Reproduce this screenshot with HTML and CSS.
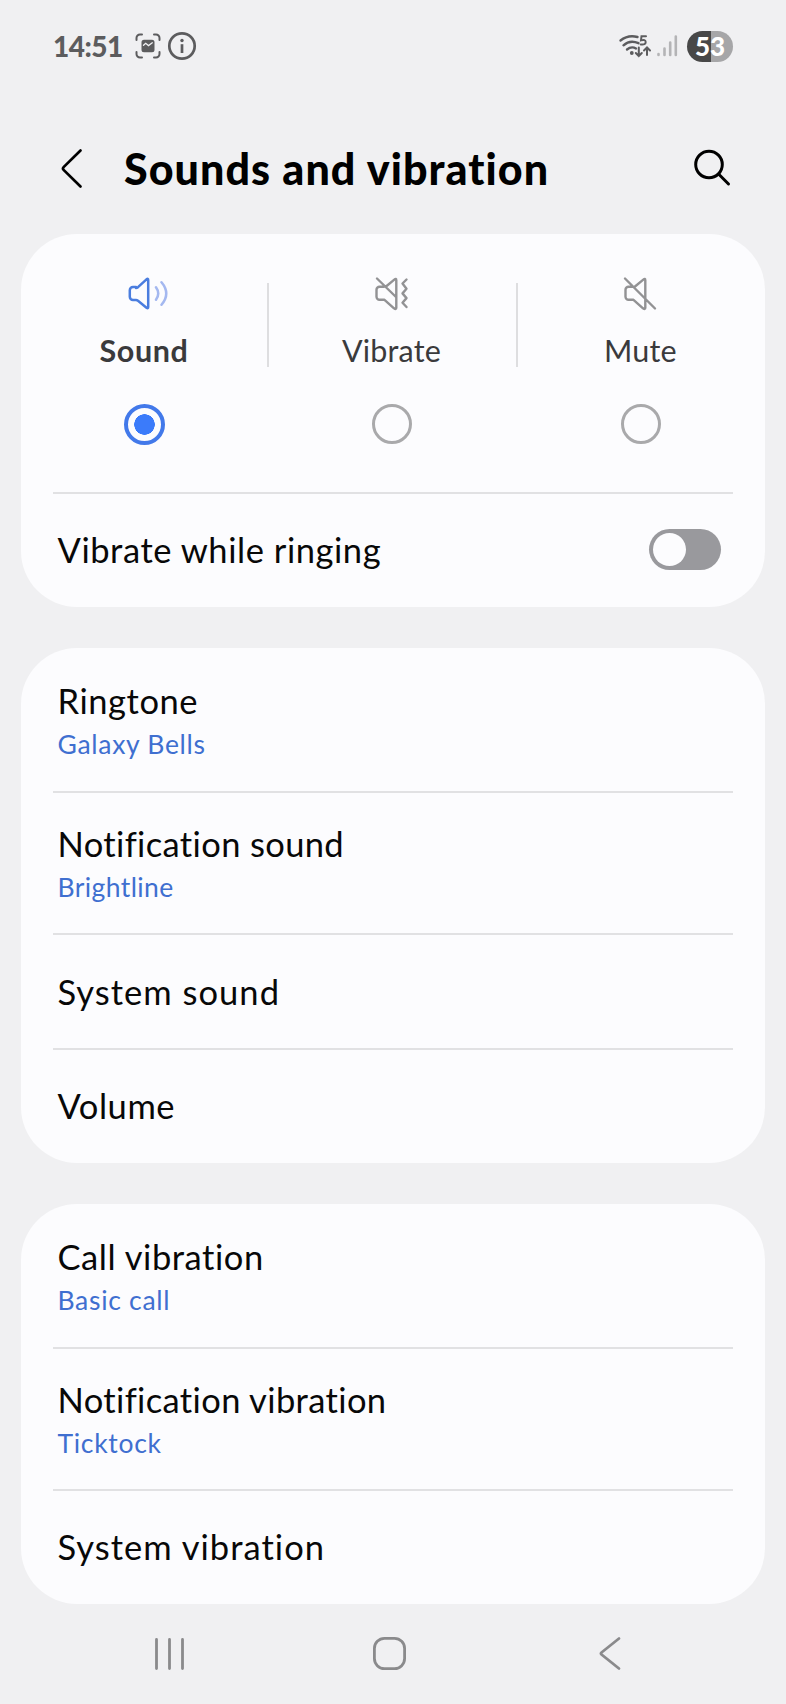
FILE: index.html
```html
<!DOCTYPE html>
<html lang="en">
<head>
<meta charset="utf-8">
<title>Sounds and vibration</title>
<link rel="stylesheet" href="styles.css">
</head>
<body>
<div class="screen">
  <div class="status">
    <span class="clock">14:51</span>
    <svg class="capture" width="26" height="26" viewBox="0 0 26 26" fill="none" stroke="#5c5c5e" stroke-width="2" stroke-linecap="round">
      <path d="M1.5 7V5a3.5 3.5 0 0 1 3.5-3.5h2M19 1.5h2A3.5 3.5 0 0 1 24.500 5v2M24.500 19v2a3.500 3.500 0 0 1-3.500 3.500h-2M7 24.500H5A3.500 3.500 0 0 1 1.500 21v-2"/>
      <rect x="7.500" y="7.800" width="11" height="10.400" rx="1.500" fill="#5c5c5e"/>
      <path d="M8.500 12.300l2.200-2 2.800 2.300 3.800-2.800" stroke="#f0f0f2" stroke-width="1.300"/>
    </svg>
    <svg class="info" width="30" height="30" viewBox="0 0 30 30" fill="none" stroke="#5c5c5e" stroke-width="2.700">
      <circle cx="15" cy="15" r="12.700"/><path d="M15 13.200v8.800"/><circle cx="15" cy="9.500" r="1.700" fill="#5c5c5e" stroke="none"/>
    </svg>
    <svg class="wifi" width="34" height="26" viewBox="0 0 34 26" fill="none" stroke="#5c5c5e" stroke-width="2.400" stroke-linecap="round">
      <path d="M2.500 7.500Q10 1.500 19.500 4M5.500 12.300Q12 6.300 20.500 10.200M9 16.500Q13.500 12.800 18 15.500"/>
      <circle cx="13.800" cy="20" r="1.900" fill="#5c5c5e" stroke="none"/>
      <path d="M28 3.200h-4.500l-.500 4.200q4.500-1.300 4.700 1.600 0 3.200-5 2.400" stroke-width="2"/>
      <path d="M20.800 14.500v8.500m-3-3l3 3 3-3M29 22v-7.500m-3 3l3-3 3 3" stroke-width="2"/>
    </svg>
    <svg class="signal" width="22" height="24" viewBox="0 0 22 24" stroke="#b4b4b6" stroke-width="2.600" stroke-linecap="round">
      <path d="M2.500 20v1M8.500 14.500V21M14.200 8.500V21M19.800 2.500V21"/>
    </svg>
    <div class="battery">53</div>
  </div>

  <header class="header">
    <svg class="back" width="24" height="42" viewBox="0 0 24 42" fill="none" stroke="#000" stroke-width="2.700" stroke-linecap="round" stroke-linejoin="round"><path d="M20.500 2.500L3.600 19.100q-1.400 1.400 0 2.800L20.500 38.500"/></svg>
    <h1 class="title">Sounds and vibration</h1>
    <svg class="search" width="40" height="40" viewBox="0 0 40 40" fill="none" stroke="#000" stroke-width="3" stroke-linecap="round"><circle cx="16" cy="16.500" r="13.300"/><path d="M25.800 26.300L35.500 36"/></svg>
  </header>

  <main class="cards">
    <section class="card">
      <div class="modes">
        <div class="mode selected">
          <svg width="50" height="36" viewBox="-3 0 50 36" fill="none" stroke="#4a7ddf" stroke-width="2.500" stroke-linecap="round" stroke-linejoin="round">
            <g transform="translate(3.500 .5)">
              <path d="M10.500 11.500H7.500a3.200 3.200 0 0 0-3.200 3.200v6.600a3.200 3.200 0 0 0 3.200 3.200h3q1 0 2 .800l8.500 6.900q1.700 1.200 1.700-.700v-27q0-1.900-1.700-.700l-8.500 7.900q-1 .800-2 .800z"/>
              <path d="M30.500 11.800q4.500 6.200 0 12.400M36 6.700q9.500 11.300 0 22.600" stroke="#a4b8f0"/>
            </g>
          </svg>
          <span class="mode-name">Sound</span><i class="radio"></i>
        </div>
        <div class="mode">
          <svg width="44" height="36" viewBox="0 0 44 36" fill="none" stroke="#929294" stroke-width="2.400" stroke-linecap="round" stroke-linejoin="round">
            <g transform="translate(-.5 .5)">
              <path d="M14.500 11.200H10a3 3 0 0 0-3 3v7.100a3 3 0 0 0 3 3h5l9.500 8.500q2.300 1.600 2.300-.600V4.700q0-2.200-2-.600L16.500 11M7.500 3L26.500 21.500"/>
              <path d="M37 4l-4 4 4 5.300-4 4.600 4 4.700-4 4.600 4 4.300"/>
            </g>
          </svg>
          <span class="mode-name">Vibrate</span><i class="radio"></i>
        </div>
        <div class="mode">
          <svg width="44" height="36" viewBox="0 0 44 36" fill="none" stroke="#929294" stroke-width="2.400" stroke-linecap="round" stroke-linejoin="round">
            <path transform="translate(-.5 .5)" d="M14.500 11.200H10a3 3 0 0 0-3 3v7.100a3 3 0 0 0 3 3h5l9.500 8.500q2.300 1.600 2.300-.600V4.700q0-2.200-2-.600L16.500 11M6.500 3L36.500 33"/>
          </svg>
          <span class="mode-name">Mute</span><i class="radio"></i>
        </div>
      </div>
      <div class="row single toggle-row"><span class="label">Vibrate while ringing</span><span class="switch"><i class="knob"></i></span></div>
    </section>

    <section class="card">
      <div class="row double first"><span class="label">Ringtone</span><span class="value">Galaxy Bells</span></div>
      <div class="row double"><span class="label tight">Notification sound</span><span class="value tight">Brightline</span></div>
      <div class="row single"><span class="label wide">System sound</span></div>
      <div class="row single"><span class="label">Volume</span></div>
    </section>

    <section class="card">
      <div class="row double first"><span class="label">Call vibration</span><span class="value">Basic call</span></div>
      <div class="row double"><span class="label tight">Notification vibration</span><span class="value">Ticktock</span></div>
      <div class="row single"><span class="label wide">System vibration</span></div>
    </section>
  </main>

  <nav class="nav">
    <svg width="36" height="36" viewBox="0 0 36 36" stroke="#8a8a8c" stroke-width="2.800" stroke-linecap="round"><path d="M5.500 3.500v29M18.500 3.500v29M31.500 3.500v29"/></svg>
    <svg width="36" height="36" viewBox="0 0 36 36" fill="none" stroke="#8a8a8c" stroke-width="2.800"><rect x="2.400" y="2.400" width="30.200" height="30.200" rx="10"/></svg>
    <svg width="36" height="36" viewBox="0 0 36 36" fill="none" stroke="#8a8a8c" stroke-width="2.800" stroke-linecap="round" stroke-linejoin="round"><path d="M27 2.500L9.500 16.500q-1.200 1 0 2L27 32.500"/></svg>
  </nav>
</div>
</body>
</html>
```
FILE: styles.css
```css
* { box-sizing: border-box; }
body { margin: 0; background: #f0f0f2; font-family: Lato, "Open Sans", sans-serif; font-variant-ligatures: none; color: #080808; }
.screen { width: 786px; height: 1704px; display: flex; flex-direction: column; overflow: hidden; }
svg { display: block; flex: none; }

.status { height: 92px; padding: 0 53px; display: flex; align-items: center; color: #5c5c5e; }
.clock { font-size: 28px; font-weight: 900; letter-spacing: -0.5px; width: 82px; white-space: nowrap; }
.info { margin-left: 6px; }
.wifi { margin-left: auto; }
.signal { margin-left: 4px; }
.battery { margin-left: 9px; width: 46px; height: 31px; border-radius: 16px; background: linear-gradient(90deg, #484848 52%, #a6a6a8 52%); color: #fff; font-size: 26px; line-height: 31px; font-weight: 900; text-align: center; }

.header { height: 142px; padding: 56px 53px 0 60px; display: flex; align-items: flex-start; }
.title { margin: -5px 0 0 40px; font-size: 43px; line-height: 52px; font-weight: 900; letter-spacing: 1.05px; color: #000; white-space: nowrap; }
.search { margin-left: auto; }

.cards { padding: 0 21px; display: flex; flex-direction: column; gap: 41px; }
.card { background: #fcfcfe; border-radius: 56px; }
.row, .modes { position: relative; }
.row { padding: 0 44px 0 36.5px; display: flex; }
.row + .row::before, .toggle-row::before { content: ""; position: absolute; top: -1px; left: 32px; right: 32px; height: 2px; background: #e1e1e3; }
.single { height: 115px; align-items: center; }
.single:last-child { height: 114px; }
.double { height: 142px; flex-direction: column; padding-top: 28.5px; }
.first { height: 144px; padding-top: 30px; }
.label { font-size: 34.5px; line-height: 46px; letter-spacing: 0.55px; white-space: nowrap; }
.label.tight { letter-spacing: 0.36px; }
.label.wide { letter-spacing: 1.02px; }
.value { font-size: 26.5px; line-height: 40px; letter-spacing: 0.7px; color: #3f6fd0; white-space: nowrap; }
.value.tight { letter-spacing: 0.4px; }
.toggle-row { justify-content: space-between; }
.switch { width: 72px; height: 41px; margin-top: -1px; border-radius: 21px; padding: 4px; background: #99999d; }
.knob { display: block; width: 33px; height: 33px; border-radius: 50%; background: #fcfcfe; }

.modes { height: 259px; display: grid; grid-template-columns: 246px 249px 249px; }
.mode { display: flex; flex-direction: column; align-items: center; padding-top: 41px; position: relative; }
.mode + .mode::before { content: ""; position: absolute; left: 0; top: 49px; width: 2px; height: 84px; background: #dedee0; }
.mode-name { margin-top: 19px; font-size: 30.5px; line-height: 40px; letter-spacing: 0.2px; color: #3a3a3c; white-space: nowrap; }
.selected .mode-name { font-weight: 700; letter-spacing: 0.6px; }
.radio { margin-top: 34px; width: 40px; height: 40px; border-radius: 50%; border: 3px solid #a9a9ab; }
.selected .radio { width: 41px; height: 41px; border: 4px solid #4279ea; background: radial-gradient(circle, #3b7bfa 10px, transparent 10.5px); }

.nav { margin-top: auto; height: 99px; padding: 31px 158px 0 151px; display: flex; justify-content: space-between; }
```
